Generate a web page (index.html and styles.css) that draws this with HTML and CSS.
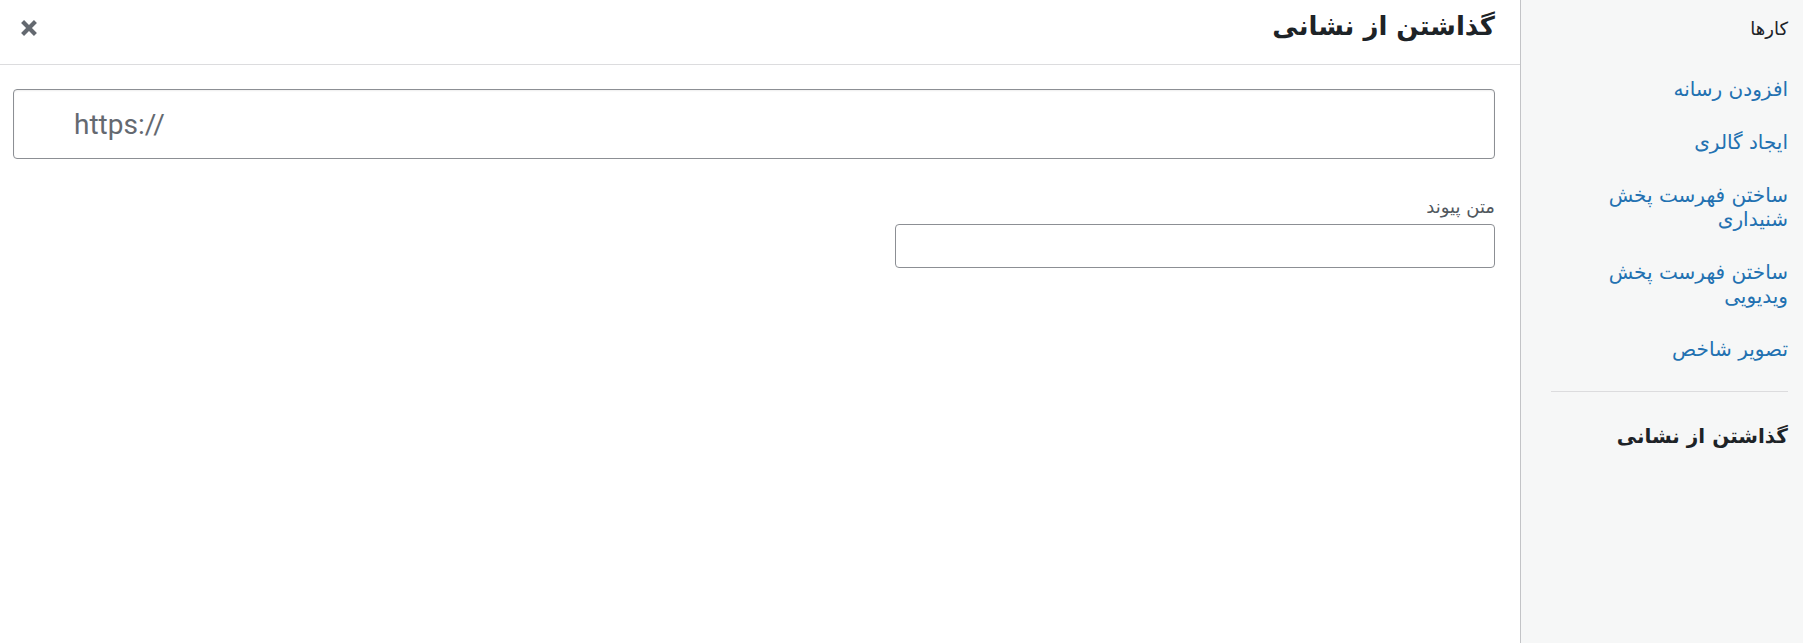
FILE: index.html
```html
<!DOCTYPE html>
<html lang="fa" dir="rtl">
<head>
<meta charset="utf-8">
<title>گذاشتن از نشانی</title>
<link rel="stylesheet" href="styles.css">
</head>
<body>
<div class="frame">
  <aside class="menu">
    <h2 class="menu-heading">کارها</h2>
    <nav class="menu-list">
      <a class="menu-item" href="#">افزودن رسانه</a>
      <a class="menu-item" href="#">ایجاد گالری</a>
      <a class="menu-item" href="#">ساختن فهرست پخش شنیداری</a>
      <a class="menu-item" href="#">ساختن فهرست پخش ویدیویی</a>
      <a class="menu-item" href="#">تصویر شاخص</a>
      <div class="separator"></div>
      <a class="menu-item active" href="#">گذاشتن از نشانی</a>
    </nav>
  </aside>
  <main class="content">
    <header class="title-bar">
      <h1 class="title">گذاشتن از نشانی</h1>
      <button class="close" type="button" aria-label="بستن">
        <svg viewBox="0 0 20 20" width="28" height="28"><path fill="#646970" d="M12.12 10l3.53 3.53-2.12 2.12L10 12.12l-3.54 3.54-2.12-2.12L7.88 10 4.34 6.46l2.12-2.12L10 7.88l3.54-3.53 2.12 2.12z"/></svg>
      </button>
    </header>
    <div class="embed">
      <input class="url-input" type="text" value="https://" dir="ltr">
      <label class="field">
        <span class="label-text">متن پیوند</span>
        <input class="text-input" type="text">
      </label>
    </div>
  </main>
</div>
</body>
</html>
```
FILE: styles.css
```css
* { box-sizing: border-box; }
html, body { margin: 0; padding: 0; }
body {
  font-family: "DejaVu Sans", sans-serif;
  background: #fff;
  color: #1d2327;
}
.frame {
  display: flex;
  height: 643px;
}
.menu {
  flex: 0 0 283px;
  background: #f6f7f7;
  border-left: 1px solid #c3c4c7;
  padding: 0 15px 0 0;
}
.menu-heading {
  margin: 0;
  padding-top: 16px;
  font-size: 18px;
  line-height: 26px;
  font-weight: normal;
  color: #1d2327;
}
.menu-list {
  margin-top: 21px;
}
.menu-item {
  display: block;
  padding: 14px 0 15px 40px;
  font-size: 20px;
  line-height: 24px;
  color: #2271b1;
  text-decoration: none;
}
.menu-item.active {
  color: #1d2327;
  font-weight: bold;
}
.separator {
  height: 1px;
  background: #dcdcde;
  margin: 15px 0 18px 30px;
}
.content {
  flex: 1;
  display: flex;
  flex-direction: column;
}
.title-bar {
  height: 65px;
  border-bottom: 1px solid #dcdcde;
  display: flex;
  padding: 0 25px 0 0;
}
.title {
  margin: 0;
  font-size: 26px;
  line-height: 52px;
  font-weight: bold;
  color: #1d2327;
}
.close {
  margin-top: 14px;
  margin-left: 15px;
  margin-right: auto;
  width: 28px;
  height: 28px;
  padding: 0;
  border: none;
  background: none;
  align-self: flex-start;
}
.close svg { display: block; }
.embed {
  padding: 24px 25px 0 13px;
}
.url-input {
  display: block;
  width: 100%;
  height: 70px;
  border: 1px solid #8c8f94;
  border-radius: 4px;
  box-shadow: inset 0 1px 2px rgba(0, 0, 0, .07);
  padding: 0 14px 0 60px;
  font-family: Roboto, sans-serif;
  font-size: 28px;
  color: #646970;
  text-align: left;
  background: #fff;
}
.field {
  display: block;
  width: 600px;
  margin-top: 38px;
}
.label-text {
  display: block;
  font-size: 18px;
  line-height: 20px;
  color: #50575e;
  margin-bottom: 7px;
}
.text-input {
  display: block;
  width: 600px;
  height: 44px;
  border: 1px solid #8c8f94;
  border-radius: 4px;
  background: #fff;
}
```
